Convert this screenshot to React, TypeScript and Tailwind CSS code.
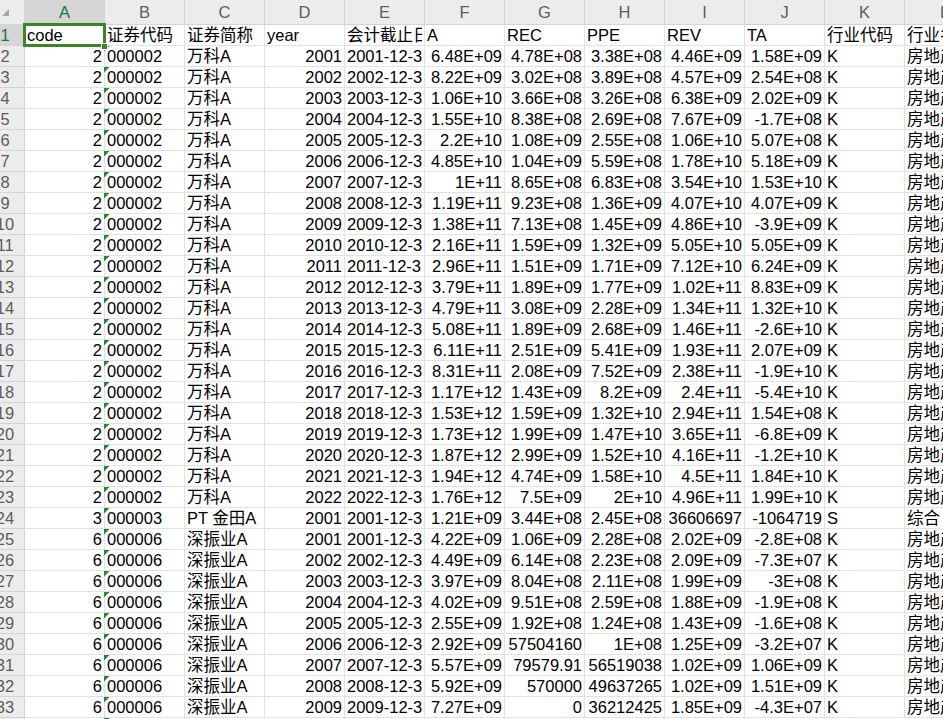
const COLS = ["A", "B", "C", "D", "E", "F", "G", "H", "I", "J", "K", "L"];
const HEAD = ["code", "证券代码", "证券简称", "year", "会计截止日期", "A", "REC", "PPE", "REV", "TA", "行业代码", "行业名称"];

const VANKE = `2001 6.48E+09 4.78E+08 3.38E+08 4.46E+09 1.58E+09
2002 8.22E+09 3.02E+08 3.89E+08 4.57E+09 2.54E+08
2003 1.06E+10 3.66E+08 3.26E+08 6.38E+09 2.02E+09
2004 1.55E+10 8.38E+08 2.69E+08 7.67E+09 -1.7E+08
2005 2.2E+10 1.08E+09 2.55E+08 1.06E+10 5.07E+08
2006 4.85E+10 1.04E+09 5.59E+08 1.78E+10 5.18E+09
2007 1E+11 8.65E+08 6.83E+08 3.54E+10 1.53E+10
2008 1.19E+11 9.23E+08 1.36E+09 4.07E+10 4.07E+09
2009 1.38E+11 7.13E+08 1.45E+09 4.86E+10 -3.9E+09
2010 2.16E+11 1.59E+09 1.32E+09 5.05E+10 5.05E+09
2011 2.96E+11 1.51E+09 1.71E+09 7.12E+10 6.24E+09
2012 3.79E+11 1.89E+09 1.77E+09 1.02E+11 8.83E+09
2013 4.79E+11 3.08E+09 2.28E+09 1.34E+11 1.32E+10
2014 5.08E+11 1.89E+09 2.68E+09 1.46E+11 -2.6E+10
2015 6.11E+11 2.51E+09 5.41E+09 1.93E+11 2.07E+09
2016 8.31E+11 2.08E+09 7.52E+09 2.38E+11 -1.9E+10
2017 1.17E+12 1.43E+09 8.2E+09 2.4E+11 -5.4E+10
2018 1.53E+12 1.59E+09 1.32E+10 2.94E+11 1.54E+08
2019 1.73E+12 1.99E+09 1.47E+10 3.65E+11 -6.8E+09
2020 1.87E+12 2.99E+09 1.52E+10 4.16E+11 -1.2E+10
2021 1.94E+12 4.74E+09 1.58E+10 4.5E+11 1.84E+10
2022 1.76E+12 7.5E+09 2E+10 4.96E+11 1.99E+10`;

const SZZY = `2001 4.22E+09 1.06E+09 2.28E+08 2.02E+09 -2.8E+08
2002 4.49E+09 6.14E+08 2.23E+08 2.09E+09 -7.3E+07
2003 3.97E+09 8.04E+08 2.11E+08 1.99E+09 -3E+08
2004 4.02E+09 9.51E+08 2.59E+08 1.88E+09 -1.9E+08
2005 2.55E+09 1.92E+08 1.24E+08 1.43E+09 -1.6E+08
2006 2.92E+09 57504160 1E+08 1.25E+09 -3.2E+07
2007 5.57E+09 79579.91 56519038 1.02E+09 1.06E+09
2008 5.92E+09 570000 49637265 1.02E+09 1.51E+09
2009 7.27E+09 0 36212425 1.85E+09 -4.3E+07`;

function expand(code: string, id: string, name: string, text: string, ind: string, indName: string) {
  return text.split("\n").map((line) => {
    const [year, a, rec, ppe, rev, ta] = line.split(" ");
    return [code, id, name, year, `${year}-12-31`, a, rec, ppe, rev, ta, ind, indName];
  });
}

const ROWS = [
  ...expand("2", "000002", "万科A", VANKE, "K", "房地产业"),
  ["3", "000003", "PT 金田A", "2001", "2001-12-31", "1.21E+09", "3.44E+08", "2.45E+08", "36606697", "-1064719", "S", "综合"],
  ...expand("6", "000006", "深振业A", SZZY, "K", "房地产业"),
  ["", "", "", "", "", "", "", "", "", "", "", ""],
];

// columns holding numbers sit on the right of the cell
const RIGHT = [0, 3, 5, 6, 7, 8, 9];

function RowHead({ n, active }: { n: number; active?: boolean }) {
  return (
    <div
      className={`flex h-[21px] w-[25px] shrink-0 items-start justify-center overflow-hidden border-r border-b border-[#d4d4d4] pr-[14px] leading-[20px] ${
        active ? "bg-[#d6d6d6] text-[#107c41]" : "bg-[#ececec] text-[#5c5c5c]"
      }`}
    >
      <span className="whitespace-nowrap">{n}</span>
    </div>
  );
}

function Cell({ value, col, flag }: { value: string; col: number; flag: boolean }) {
  const right = RIGHT.includes(col);
  return (
    <div className="relative flex h-[21px] w-[80px] shrink-0 items-start border-r border-b border-[#e2e2e2] px-[2px] leading-[20px]">
      <div className={`h-[20px] w-full overflow-hidden whitespace-nowrap ${right ? "text-right" : "text-left"}`}>
        {value}
      </div>
      {flag && (
        <svg className="absolute top-0 left-[-1px]" width="6" height="6" viewBox="0 0 6 6">
          <path d="M0 0H5.5L0 5.5Z" fill="#1e8a2e" />
        </svg>
      )}
    </div>
  );
}

export default function App() {
  return (
    <div className="relative h-[719px] w-[943px] overflow-hidden bg-white text-[16.5px] text-black [font-family:'Liberation_Sans','Noto_Sans_CJK_SC',sans-serif]">
      {/* Column letters */}
      <div className="flex h-[25px]">
        <div className="flex w-[25px] shrink-0 items-end border-r border-b border-[#d4d4d4] bg-[#ececec] pb-[8px] pl-[2px]">
          <svg width="7" height="7" viewBox="0 0 7 7">
            <path d="M7 0V7H0Z" fill="#a6a6a6" />
          </svg>
        </div>
        {COLS.map((c, i) => (
          <div
            key={c}
            className={`flex w-[80px] shrink-0 items-center justify-center border-r border-b border-[#d4d4d4] ${
              i === 0 ? "bg-[#d6d6d6] text-[#107c41]" : "bg-[#ececec] text-[#5c5c5c]"
            }`}
          >
            {c}
          </div>
        ))}
      </div>

      {/* Header row */}
      <div className="flex">
        <RowHead n={1} active />
        {HEAD.map((h) => (
          <Cell key={h} value={h} col={-1} flag={false} />
        ))}
      </div>

      {ROWS.map((row, r) => (
        <div key={r} className="flex">
          <RowHead n={r + 2} />
          {row.map((v, i) => (
            <Cell key={i} value={v} col={i} flag={i === 1} />
          ))}
        </div>
      ))}

      {/* Selected cell A1 */}
      <div className="absolute top-[23px] left-[23px] h-[24px] w-[83px] border-[3px] border-[#3b8526]" />
      <div className="absolute top-[43px] left-[101px] h-[7px] w-[7px] border border-white bg-[#3b8526]" />
    </div>
  );
}
